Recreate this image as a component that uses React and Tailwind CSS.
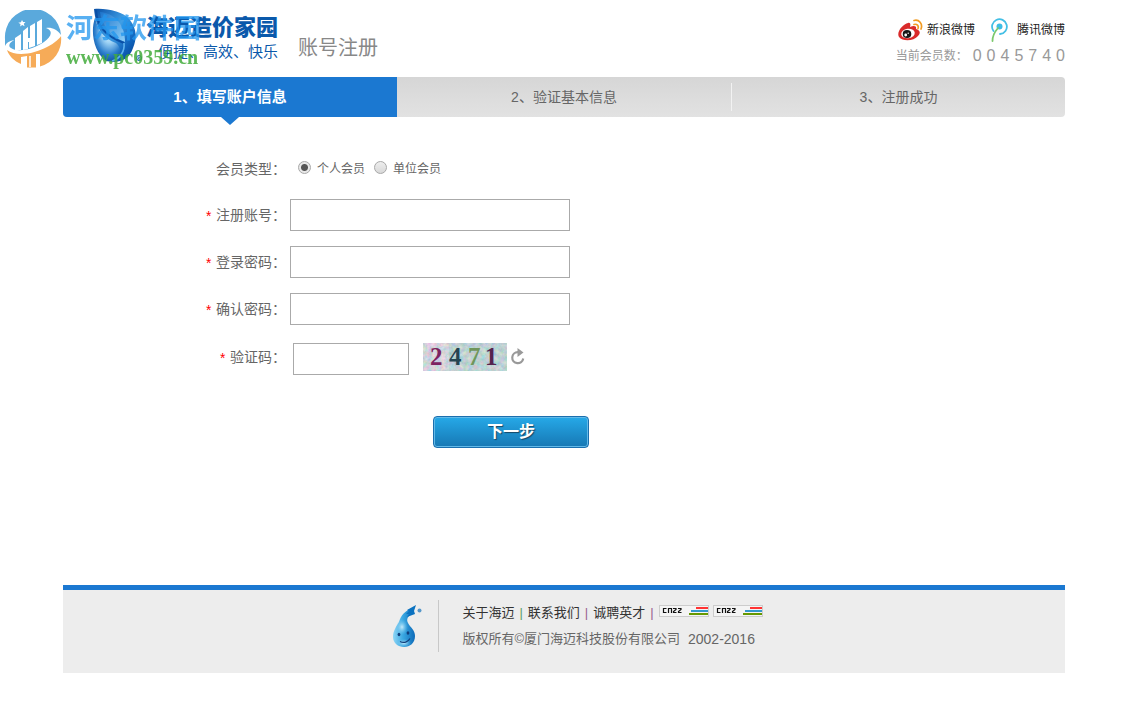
import React from "react";

const steps = ["1、填写账户信息", "2、验证基本信息", "3、注册成功"];

const fields = [
  { id: "account", label: "注册账号：", type: "text" },
  { id: "password", label: "登录密码：", type: "password" },
  { id: "confirm", label: "确认密码：", type: "password" },
];

function HaimaiMark() {
  return (
    <svg className="h-14 w-[50px] shrink-0" viewBox="0 0 50 56" aria-hidden="true">
      <defs>
        <linearGradient id="leaf" x1="0" y1="0" x2="1" y2="1">
          <stop offset="0" stopColor="#0a4fa6" />
          <stop offset="0.45" stopColor="#3f9fe6" />
          <stop offset="0.75" stopColor="#0f62bb" />
          <stop offset="1" stopColor="#053b88" />
        </linearGradient>
        <radialGradient id="leafGlow" cx="0.6" cy="0.3" r="0.75">
          <stop offset="0" stopColor="#f2fbff" />
          <stop offset="0.35" stopColor="#9fd3f5" />
          <stop offset="0.7" stopColor="#2d7fcd" />
          <stop offset="1" stopColor="#0a4795" />
        </radialGradient>
        <linearGradient id="leafInner" x1="0" y1="0" x2="1" y2="1">
          <stop offset="0" stopColor="#1c74cc" />
          <stop offset="1" stopColor="#8fd0f8" />
        </linearGradient>
      </defs>
      <path d="M2 1C14 0 31 3 38 12C45 21 45 31 41 40C38 49 31 54 21 54C27 47 27 41 22 36C12 31 4 22 2 1Z" fill="url(#leaf)" />
      <path d="M3 10C-2 24 2 44 14 53L21 54C30 48 30 40 24 35C12 31 6 22 3 10Z" fill="url(#leafGlow)" />
      <path d="M8 4C20 5 33 14 33 34C20 29 10 19 8 4Z" fill="url(#leafInner)" />
      <path d="M4 2C5 18 13 28 32 35" fill="none" stroke="#0a4fa6" strokeWidth="2" />
      <path d="M32 35C33 43 28 51 20 53" fill="none" stroke="#5fb2ee" strokeWidth="1.6" />
      <circle cx="47" cy="50" r="2.5" fill="none" stroke="#1263b1" />
      <path d="M46 52v-3h1.5v1.2H46l2 1.8" fill="none" stroke="#1263b1" strokeWidth=".6" />
    </svg>
  );
}

function Watermark() {
  return (
    <div className="pointer-events-none absolute left-[4px] top-[10px] flex gap-1" aria-hidden="true">
      <svg className="h-[58px] w-[58px]" viewBox="0 0 58 58">
        <path d="M1 29A28 28 0 0 1 57 25C53 19 47 17 42 18C50 21 47 27 40 32C30 39 14 43 7 38C4 36 5 33 10 30C5 31 2 33 1 36Z" fill="#5aa9dc" />
        <path d="M3 40C12 47 30 44 43 37C51 33 56 28 57 26A28 28 0 0 1 36 56.500V44H32V57.500H23V46L17 47V54C10 51 5 46 3 40Z" fill="#f6ab58" />
        <path d="M11 39V28L17 24V40H11ZM19 40V21L24 17V28H26V16L31 13V36L25 38V32H24V39ZM33 35V12L38 9V33Z" fill="white" />
        <path d="m18 10 1.1 2 2.400 0-1.700 1.800 .8 2.400-2.400-1.200-2 1.500 .3-2.600-2.200-1.200 2.600-.5z" fill="white" />
        <path d="M26 46V57M34 44V57" stroke="white" strokeWidth="1.5" />
      </svg>
      <div className="flex flex-col font-bold">
        <span className="text-[27px] leading-[38px] text-[#2196ee] opacity-75">河东软件园</span>
        <span className="font-['Liberation_Serif',serif] text-[20px] leading-[18px] text-[#43ac3c] opacity-85">www.pc0359.cn</span>
      </div>
    </div>
  );
}

function WeiboIcon() {
  return (
    <svg className="h-[22px] w-[25px]" viewBox="0 0 25 22" aria-hidden="true">
      <path d="M10 4C12 3 13 5 12 8C16 6 19 7 18 10C22 11 23 14 20 17C16 22 5 23 1 18C-2 13 5 5 10 4Z" fill="#d92b2b" />
      <ellipse cx="10" cy="14.5" rx="6.8" ry="4.8" transform="rotate(-8 10 14.5)" fill="white" />
      <ellipse cx="9" cy="15" rx="4.3" ry="3.9" fill="#161616" />
      <circle cx="7.7" cy="16" r="1.4" fill="white" />
      <circle cx="10.2" cy="14.2" r=".7" fill="white" />
      <path d="M16 1.5C21 0 25 5 23 10M16 5.5C19 4.5 21 7 20 9.5" fill="none" stroke="#f29b22" strokeWidth="1.7" strokeLinecap="round" />
    </svg>
  );
}

function TencentIcon() {
  return (
    <svg className="h-6 w-[18px]" viewBox="0 0 18 24" aria-hidden="true">
      <path d="M3.5 13A7.4 7.4 0 1 1 10 16" fill="none" stroke="#43bfe5" strokeWidth="1.8" strokeLinecap="round" />
      <circle cx="9.5" cy="8.5" r="3" fill="#3dbde5" />
      <path d="M8 10C4.500 14 2.500 18 2.500 23" fill="none" stroke="#7bc86c" strokeWidth="1.8" strokeLinecap="round" />
    </svg>
  );
}

function Captcha() {
  return (
    <div className="h-7 w-[84px] bg-[#a9c8cc]" role="img" aria-label="2471">
      <svg className="h-full w-full" viewBox="0 0 84 28" aria-hidden="true">
        <filter id="grain" x="0" y="0" width="100%" height="100%">
          <feTurbulence type="fractalNoise" baseFrequency=".22" numOctaves="3" seed="6" />
          <feColorMatrix values=".9 0 0 0 .2  0 .6 0 0 .42  0 0 .5 0 .48  0 0 0 0 1" />
        </filter>
        <rect width="84" height="28" filter="url(#grain)" />
        <rect width="26" height="28" fill="#c9a0d0" opacity=".15" />
        <rect x="26" width="58" height="28" fill="#7fb5b5" opacity=".25" />
        <g fontFamily="Liberation Serif, serif" fontWeight="bold" fontSize="25">
          <text x="7" y="22" fill="#7e2360">2</text>
          <text x="26" y="22" fill="#254452">4</text>
          <text x="45" y="22" fill="#71965b">7</text>
          <text x="62" y="22" fill="#54234f">1</text>
        </g>
      </svg>
    </div>
  );
}

function Droplet() {
  return (
    <svg className="h-[43px] w-[30px]" viewBox="0 0 30 43" aria-hidden="true">
      <defs>
        <linearGradient id="drop" x1="0" y1="0" x2="1" y2="0">
          <stop offset="0" stopColor="#8fd6f6" />
          <stop offset=".45" stopColor="#3aa8e2" />
          <stop offset="1" stopColor="#0d6ab8" />
        </linearGradient>
        <radialGradient id="dropShine" cx=".5" cy=".5" r=".5">
          <stop offset="0" stopColor="#d4f1fd" stopOpacity=".9" />
          <stop offset="1" stopColor="#6fc6ef" stopOpacity="0" />
        </radialGradient>
      </defs>
      <path d="M20 3C13 6 9 10 7 17C4 22 1 26 1 32C1 38 6 42 12 42C18 42 23 38 23 31C23 25 18 22 16 18C14 14 16 11 20 9Z" fill="url(#drop)" />
      <ellipse cx="10" cy="22" rx="6" ry="8" fill="url(#dropShine)" />
      <ellipse cx="12" cy="38" rx="7" ry="4" fill="url(#dropShine)" />
      <path d="m24 0-9 5 2 1-3 3 3 0-2 3 8-3-1-3z" fill="#0b72c0" />
      <circle cx="27.500" cy="5.500" r="2" fill="#5798ca" />
      <ellipse cx="7" cy="29.500" rx="1.4" ry="1.8" fill="#103f7c" />
      <ellipse cx="16" cy="28" rx="1.4" ry="1.8" fill="#103f7c" />
      <path d="M8 36.500C12 38.500 16 37 18 33.500" fill="none" stroke="#103f7c" strokeWidth="1.2" />
    </svg>
  );
}

function CnzzBadge() {
  return (
    <a href="#stats" aria-label="CNZZ" className="flex h-3 w-[50px] items-center justify-end border border-[#cccccc] bg-[#f4f4f4]">
      <svg className="h-2.5 w-[46px]" viewBox="0 0 46 10" aria-hidden="true">
        <path d="M4.500 2.500H1.500V6.500H4.500M6.500 7V2.500H9.500V7M11 2.500H14V3.500L11.500 5.500V6.500H14.500M16 2.500H19V3.500L16.500 5.500V6.500H19.500" fill="none" stroke="#111" strokeWidth="1.2" />
        <path d="M34 1h12v2H34z" fill="#ff3333" />
        <path d="M29 4h17v2H29z" fill="#3399cc" />
        <path d="M27 7h19v2H27z" fill="#669900" />
      </svg>
    </a>
  );
}

function RequiredLabel({ id, children }) {
  return (
    <label htmlFor={id} className="flex w-[223px] shrink-0 items-center justify-end gap-[3px] text-sm">
      <span className="pt-[6px] font-['Liberation_Mono',monospace] text-sm text-[#ff0000]">*</span>
      <span>{children}</span>
    </label>
  );
}

export default function App() {
  return (
    <div className="relative bg-white pl-[63px] pr-[74px] font-['Liberation_Sans','Noto_Sans_CJK_SC',sans-serif] text-[#666666]">
      <header className="flex h-[77px] items-start justify-between">
        <div className="flex items-start pl-[29px] pt-2">
          <HaimaiMark />
          <div className="flex flex-col items-end pl-1 pt-1 text-[#0a59ab]">
            <span className="text-[22px] font-black leading-8">海迈造价家园</span>
            <span className="text-[15px] leading-4">便捷、高效、快乐</span>
          </div>
          <h1 className="pl-5 pt-[26px] text-xl leading-7 text-[#888888]">账号注册</h1>
        </div>
        <div className="flex flex-col items-end pt-[18px]">
          <nav className="flex h-6 items-center gap-[15px] text-xs text-[#222222]">
            <a href="#weibo" className="flex items-center gap-1"><WeiboIcon />新浪微博</a>
            <a href="#tencent" className="flex items-center gap-[9px]"><TencentIcon />腾讯微博</a>
          </nav>
          <div className="flex h-7 items-center text-xs text-[#999999]">
            <span className="pr-[5px]">当前会员数：</span>
            <span className="flex gap-[5px] text-base">
              {"0045740".split("").map((digit, i) => <span key={i}>{digit}</span>)}
            </span>
          </div>
        </div>
      </header>

      <ol className="grid h-10 grid-cols-3 rounded bg-linear-to-b from-[#d6d6d6] to-[#e2e2e2] text-sm">
        {steps.map((step, i) => (
          <li
            key={step}
            aria-current={i === 0 ? "step" : undefined}
            className={
              i === 0
                ? "relative flex items-center justify-center rounded-l bg-[#1b78d1] text-[15px] font-bold text-white"
                : "flex items-center justify-center"
            }
          >
            {i === 0 && (
              <svg className="absolute left-1/2 top-full h-2 w-[18px] -translate-x-1/2" viewBox="0 0 18 8" aria-hidden="true">
                <path d="M0 0h18L9 8z" fill="#1b78d1" />
              </svg>
            )}
            {i === 2 && <span className="h-7 w-px self-center bg-[#f2f2f2]" />}
            <span className="grow text-center">{step}</span>
          </li>
        ))}
      </ol>

      <main>
        <form className="flex h-[468px] flex-col pt-[42px]">
          <fieldset className="flex h-6 items-center gap-1">
            <legend className="sr-only">会员类型</legend>
            <span className="w-[223px] shrink-0 text-right text-sm">会员类型：</span>
            <div className="flex items-center gap-[9px] pl-2 text-xs">
              {["个人会员", "单位会员"].map((kind, i) => (
                <label key={kind} className="flex items-start gap-[6px]">
                  <input
                    type="radio"
                    name="kind"
                    defaultChecked={i === 0}
                    className="h-[13px] w-[13px] appearance-none rounded-full border border-[#a8a8a8] bg-linear-to-b from-[#eeeeee] to-[#d8d8d8] checked:bg-[radial-gradient(circle,#555555_0_3px,#e8e8e8_4px)]"
                  />
                  <span>{kind}</span>
                </label>
              ))}
            </div>
          </fieldset>
          <div className="flex flex-col gap-[15px] pt-4">
            {fields.map((field) => (
              <div key={field.id} className="flex items-center gap-1">
                <RequiredLabel id={field.id}>{field.label}</RequiredLabel>
                <input id={field.id} type={field.type} className="h-8 w-[280px] border border-[#aaaaaa] px-2 text-sm" />
              </div>
            ))}
          </div>
          <div className="flex items-start gap-[7px] pt-[18px]">
            <div className="flex h-7 items-center"><RequiredLabel id="code">验证码：</RequiredLabel></div>
            <input id="code" type="text" className="h-8 w-[116px] border border-[#aaaaaa] px-2 text-sm" />
            <div className="flex items-center gap-[3px] pl-[7px]">
              <Captcha />
              <button type="button" aria-label="刷新验证码">
                <svg className="h-[18px] w-4" viewBox="0 0 16 18" aria-hidden="true">
                  <path d="M8 4.2A5.5 5.5 0 1 0 13.2 10.500" fill="none" stroke="#999999" strokeWidth="2.2" />
                  <path d="M7.5 0 13.500 4.500 7.5 9z" fill="#999999" />
                </svg>
              </button>
            </div>
          </div>
          <div className="pl-[370px] pt-[41px]">
            <button
              type="button"
              className="flex h-8 w-[156px] items-center justify-center rounded border border-[#1b6fae] bg-linear-to-b from-[#26a9e8] to-[#1778b4] text-base font-bold text-white inset-ring inset-ring-[#62b9e8] text-shadow-[1px_1px_1px_#174866]"
            >
              下一步
            </button>
          </div>
        </form>
      </main>

      <footer className="flex h-[88px] items-start justify-center border-t-[5px] border-[#1b78d1] bg-[#ededed] pl-[27px]">
        <div className="flex pt-[10px]">
          <div className="flex h-[52px] w-[47px] items-center border-r border-[#c8c8c8]"><Droplet /></div>
          <div className="flex flex-col pl-[23px] text-[13px]">
            <div className="flex h-[26px] items-center gap-[5px] text-[#333333]">
              <a href="#about">关于海迈</a><span className="text-[#5b9e64]">|</span>
              <a href="#contact">联系我们</a><span className="text-[#99628f]">|</span>
              <a href="#jobs">诚聘英才</a><span className="text-[#99628f]">|</span>
              <div className="flex gap-1 pb-1"><CnzzBadge /><CnzzBadge /></div>
            </div>
            <p className="flex h-[26px] items-center gap-2">
              <span>版权所有©厦门海迈科技股份有限公司</span><span className="text-sm">2002-2016</span>
            </p>
          </div>
        </div>
      </footer>
      <Watermark />
    </div>
  );
}
